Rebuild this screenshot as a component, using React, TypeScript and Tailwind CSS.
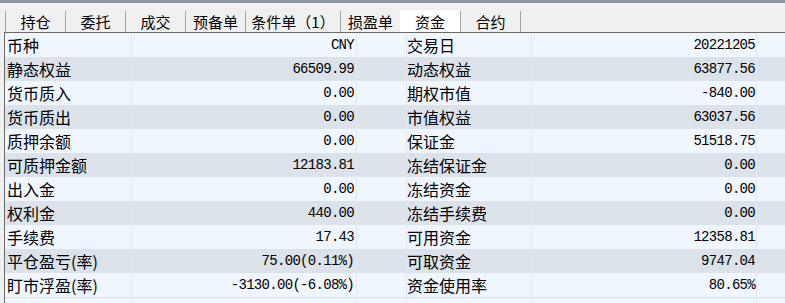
import React from 'react';

const TABS: { label: string; w: string; active?: boolean; last?: boolean }[] = [
  { label: '持仓', w: 'w-[60px]' },
  { label: '委托', w: 'w-[60px]' },
  { label: '成交', w: 'w-[60px]' },
  { label: '预备单', w: 'w-[60px]' },
  { label: '条件单（1）', w: 'w-[95px]' },
  { label: '损盈单', w: 'w-[60px]' },
  { label: '资金', w: 'w-[60px]', active: true },
  { label: '合约', w: 'w-[61px]', last: true },
];

const ROWS: [string, string, string, string][] = [
  ['币种', 'CNY', '交易日', '20221205'],
  ['静态权益', '66509.99', '动态权益', '63877.56'],
  ['货币质入', '0.00', '期权市值', '-840.00'],
  ['货币质出', '0.00', '市值权益', '63037.56'],
  ['质押余额', '0.00', '保证金', '51518.75'],
  ['可质押金额', '12183.81', '冻结保证金', '0.00'],
  ['出入金', '0.00', '冻结资金', '0.00'],
  ['权利金', '440.00', '冻结手续费', '0.00'],
  ['手续费', '17.43', '可用资金', '12358.81'],
  ['平仓盈亏(率)', '75.00(0.11%)', '可取资金', '9747.04'],
  ['盯市浮盈(率)', '-3130.00(-6.08%)', '资金使用率', '80.65%'],
];

const CJK = "font-['Noto_Sans_CJK_SC','Noto_Sans',sans-serif]";
const MONO = "font-['Liberation_Mono','Noto_Sans_CJK_SC',monospace]";
const LINE = 'border-r border-[#e2e7ed]';

function Row({ cells, shade }: { cells: string[]; shade: boolean }) {
  const [l1, v1, l2, v2] = cells;
  return (
    <div
      className={`grid grid-cols-[127px_225px_50px_125px_225px_1fr] h-[24px] ${
        shade ? 'bg-[#dce2ea]' : 'bg-[#f0f6fd]'
      }`}
    >
      <div className={`${LINE} ${CJK} text-[16px] leading-none flex items-center pl-[2px] whitespace-nowrap`}>{l1}</div>
      <div className={`${LINE} ${MONO} text-[14px] tracking-[-0.7px] leading-none flex items-center justify-end pr-[2px] whitespace-nowrap`}>{v1}</div>
      <div className={LINE} />
      <div className={`${LINE} ${CJK} text-[16px] leading-none flex items-center whitespace-nowrap`}>{l2}</div>
      <div className={`${LINE} ${MONO} text-[14px] tracking-[-0.7px] leading-none flex items-center justify-end pr-[1px] whitespace-nowrap`}>{v2}</div>
      <div />
    </div>
  );
}

export default function App() {
  return (
    <div className="w-[785px] h-[303px] bg-[#f0f0f0] overflow-hidden flex flex-col text-black">
      <div className="h-[3px] bg-[#8e959e] shrink-0" />
      <div className="h-[29px] shrink-0 flex items-end pl-[5px]">
        {TABS.map((t) =>
          t.active ? (
            <div
              key={t.label}
              className={`${t.w} h-[22px] bg-white flex items-center justify-center ${CJK} text-[15px] leading-none`}
            >
              {t.label}
            </div>
          ) : (
            <div
              key={t.label}
              className={`${t.w} h-[21px] border-l border-[#a3a3a3] ${
                t.last ? 'border-r' : ''
              } flex items-center justify-center ${CJK} text-[15px] leading-none whitespace-nowrap`}
            >
              {t.label}
            </div>
          ),
        )}
      </div>
      <div className="ml-[4px] flex-1 border-l border-t border-[#6b6b6b] bg-[#f0f6fd] flex flex-col">
        {ROWS.map((r, i) => (
          <Row key={r[0]} cells={r} shade={i % 2 === 1} />
        ))}
        <div className="flex-1 grid grid-cols-[127px_225px_50px_125px_225px_1fr] border-t border-[#dde3ea]">
          <div className={LINE} />
          <div className={LINE} />
          <div className={LINE} />
          <div className={LINE} />
          <div className={LINE} />
          <div />
        </div>
      </div>
    </div>
  );
}
